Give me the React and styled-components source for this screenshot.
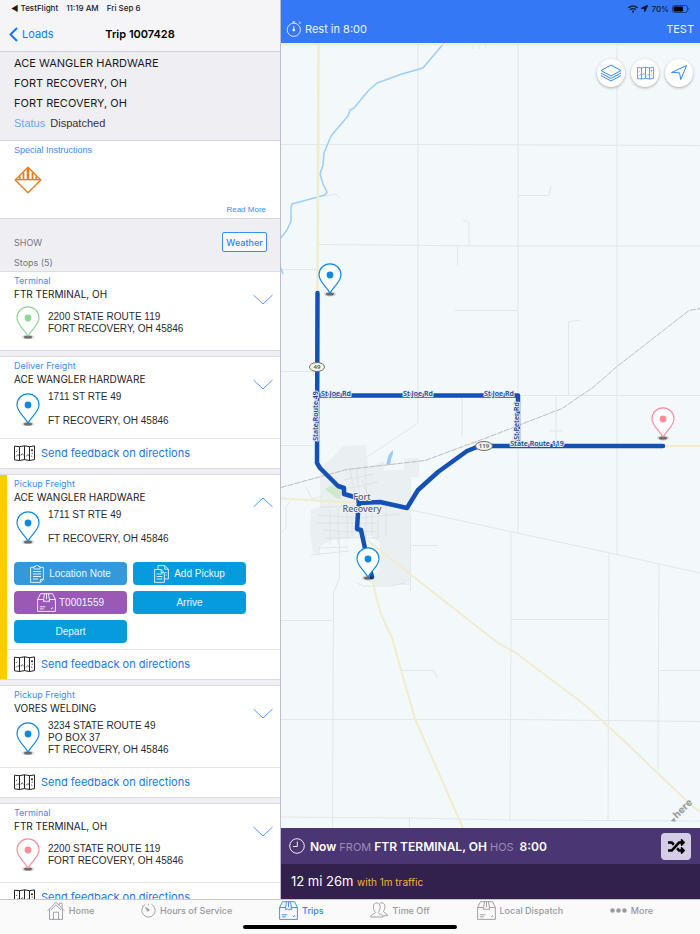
import React, { useState } from "react";
import styled, { createGlobalStyle, css } from "styled-components";
import { FaRandom, FaLocationArrow, FaWifi } from "react-icons/fa";

const PIN_COLORS = {
  green: "#8fd694",
  blue: "#1089e0",
  pink: "#ff8c9b",
};

const STOPS = [
  {
    id: 1,
    type: "Terminal",
    name: "FTR TERMINAL, OH",
    pin: "green",
    address: ["2200 STATE ROUTE 119", "FORT RECOVERY, OH 45846"],
  },
  {
    id: 2,
    type: "Deliver Freight",
    name: "ACE WANGLER HARDWARE",
    pin: "blue",
    address: ["1711 ST RTE 49", "", "FT RECOVERY, OH 45846"],
    feedback: true,
  },
  {
    id: 3,
    type: "Pickup Freight",
    name: "ACE WANGLER HARDWARE",
    pin: "blue",
    address: ["1711 ST RTE 49", "", "FT RECOVERY, OH 45846"],
    feedback: true,
    active: true,
  },
  {
    id: 4,
    type: "Pickup Freight",
    name: "VORES WELDING",
    pin: "blue",
    address: ["3234 STATE ROUTE 49", "PO BOX 37", "FT RECOVERY, OH 45846"],
    feedback: true,
  },
  {
    id: 5,
    type: "Terminal",
    name: "FTR TERMINAL, OH",
    pin: "pink",
    address: ["2200 STATE ROUTE 119", "FORT RECOVERY, OH 45846"],
    feedback: true,
  },
];

/* ---------- icons ---------- */

const PinShape = ({ color }) => (
  <>
    <ellipse cx="12" cy="31" rx="6" ry="2.4" fill="#000" opacity="0.16" />
    <ellipse cx="12" cy="31" rx="4" ry="1.5" fill="#000" opacity="0.5" />
    <path
      d="M12 30C8.5 23.5 1 19 1 11.8a11 11 0 0 1 22 0C23 19 15.5 23.5 12 30z"
      fill="#fff"
      stroke={color}
      strokeWidth="1.2"
      strokeLinejoin="round"
    />
    <circle cx="12" cy="12" r="3.4" fill={color} />
  </>
);

const PinIcon = ({ color }) => (
  <svg width="24" height="33" viewBox="0 0 24 33" aria-hidden="true">
    <PinShape color={color} />
  </svg>
);

const FoldedMapIcon = ({ width = 21, height = 16 }) => (
  <svg
    width={width}
    height={height}
    viewBox="0 0 21 16"
    fill="none"
    stroke="currentColor"
    strokeLinejoin="round"
    aria-hidden="true"
  >
    <path d="M.5 1.2l5 .5 5-.9 5 .9 5-.8v13.700l-5 .9-5-.9-5 .9-5-.7z" />
    <path d="M5.500 1.700v13.800M10.500.8v13.800M15.500 1.700v13.800" />
    <path
      d="M1.800 6.800l1.500-.8M2 11.500l1.700-1.700 1.500.6M6.800 10.500l1.300-1.800 1.600 1.500M12 11.500l1.500-1.700 1.500.5M17 10.800l1.400.9M18.200 7.500v1.500"
      strokeWidth="0.7"
    />
    <circle cx="18" cy="5.200" r="1" fill="currentColor" stroke="none" />
  </svg>
);

const WarningSignIcon = () => (
  <svg width="28" height="28" viewBox="0 0 28 28" fill="none" stroke="#e67e22" aria-hidden="true">
    <path d="M14 1.200L26.800 14 14 26.800 1.200 14z" strokeWidth="1.4" />
    <path d="M1.500 13.700h25" strokeWidth="1.4" />
    <path d="M14 2v11.500" strokeWidth="2.6" />
    <path d="M9.500 6.500v7M18.500 6.500v7M5.800 10.500v3M22.200 10.500v3" strokeWidth="1.8" />
  </svg>
);

const BoxIcon = () => (
  <svg
    width="19"
    height="19"
    viewBox="0 0 19 19"
    fill="none"
    stroke="currentColor"
    strokeWidth="0.9"
    strokeLinejoin="round"
    aria-hidden="true"
  >
    <path d="M.6 6.500v11.900h17.800V6.500L15.500.7h-12zM.6 6.500h6M12.400 6.500h6" />
    <path d="M7.500.7L6.600 6.500v2.300l1.800-1 1.200 1.400 1.200-1.400 1.600 1V6.500L11.500.7M9.500.7v5.500" />
    <path d="M2.800 13.800h5.500M2.800 15.900h4M14 16l1.800-1.600M15.800 16v-.5" />
  </svg>
);

const ClipboardIcon = () => (
  <svg width="14" height="18" viewBox="0 0 14 18" fill="none" stroke="currentColor" strokeWidth="0.9" aria-hidden="true">
    <path d="M4 2.300H.6v15.100h9.800l3-3V2.300H10" />
    <path d="M10.400 17.400v-3h3M4 1.500h1.500a1.500 1.500 0 0 1 3 0H10v2.500H4zM3 6.500h8M3 9h8M3 11.500h8M3 14h5" />
  </svg>
);

const PagesIcon = () => (
  <svg width="15" height="18" viewBox="0 0 15 18" fill="none" stroke="currentColor" strokeWidth="0.9" aria-hidden="true">
    <path d="M.6 4.500h6.500l3.200 3.200v9.700H.6zM7.100 4.500v3.200h3.200" />
    <path d="M4 4.500V.6h6.700l3.700 3.600v9.700h-4M10.700.6v3.600h3.700M2.500 9h5.800M2.500 11.500h5.800M2.500 14h5.800M11.500 7.500h1.300M11.500 10h1.300" />
  </svg>
);

const ClockIcon = () => (
  <svg width="16" height="16" viewBox="0 0 16 16" fill="none" stroke="currentColor" strokeWidth="0.9" aria-hidden="true">
    <circle cx="8" cy="8" r="7.3" />
    <path d="M8.300 3.500v5H4" />
  </svg>
);

const StopwatchIcon = () => (
  <svg width="16" height="16" viewBox="0 0 16 16" fill="none" stroke="currentColor" strokeWidth="0.9" aria-hidden="true">
    <circle cx="7.8" cy="8.8" r="6.6" />
    <path d="M7.800 5v4.500M6.300.8h3M7.800.8v1.400M13 2.800l1.200-1.300M13.400.8l1.500 1.300" />
    <circle cx="7.8" cy="9" r="1" fill="currentColor" />
  </svg>
);

const ChevronIcon = ({ up }) => (
  <svg width="20" height="11" viewBox="0 0 20 11" fill="none" stroke="currentColor" aria-hidden="true">
    <path d={up ? "M.5 10L10 1l9.500 9" : "M.5 1L10 10l9.500-9"} />
  </svg>
);

const LayersIcon = () => (
  <svg width="22" height="20" viewBox="0 0 22 20" fill="#fff" stroke="currentColor" strokeLinejoin="round" aria-hidden="true">
    <path d="M1 12.500l10 5.500 10-5.500" />
    <path d="M1 10l10 5.500L21 10" />
    <path d="M11 2l10 5.500L11 13 1 7.500z" />
  </svg>
);

const NavigateIcon = () => (
  <svg width="18" height="18" viewBox="0 0 18 18" fill="none" stroke="currentColor" strokeLinejoin="round" aria-hidden="true">
    <path d="M16.500 1.500L10.800 15.500 9.500 8.800 1.500 8.500z" />
  </svg>
);

const HomeIcon = () => (
  <svg width="18" height="19" viewBox="0 0 18 19" fill="none" stroke="currentColor" strokeWidth="0.9" aria-hidden="true">
    <path d="M.6 9.800L9 1.200l8.400 8.600M2.500 8.200v10.200h13V8.200M6.500 18.400v-7.200h5v7.200" />
    <path d="M12.300 4.400V2.200h2.800v5M4 9l5-5.200L14 9" />
  </svg>
);

const DialIcon = () => (
  <svg width="15" height="15" viewBox="0 0 15 15" fill="none" stroke="currentColor" strokeWidth="0.9" aria-hidden="true">
    <path d="M10.500 1.400A6.700 6.700 0 1 1 4.300 1.500M2.300 3.200l-.9-.8M7.500.8v1.500" />
    <path d="M4.500 4.500l3.800 2.300-1.500 1.500z" fill="currentColor" />
  </svg>
);

const PeopleIcon = () => (
  <svg width="18" height="16" viewBox="0 0 18 16" fill="none" stroke="currentColor" strokeWidth="0.9" aria-hidden="true">
    <path d="M.6 15c0-3 4-2.500 4.700-4.500C3.500 8 3 5.500 3.700 3 4.500.3 9 .3 9.800 3c.7 2.500.2 5-1.500 7.500.7 2 4.700 1.500 4.700 4.500z" />
    <path d="M9.800 1.600c1.800-1.500 4.500-.7 5 1.600.5 2.300-.2 4.300-1.400 6.200.5 1.800 4 1.600 4 4.400H13" />
  </svg>
);

const DotsIcon = () => (
  <svg width="17" height="5" viewBox="0 0 17 5" fill="currentColor" aria-hidden="true">
    <circle cx="2.5" cy="2.5" r="2.2" />
    <circle cx="8.5" cy="2.5" r="2.2" />
    <circle cx="14.5" cy="2.5" r="2.2" />
  </svg>
);

const BatteryIcon = () => (
  <svg width="18" height="8" viewBox="0 0 18 8" aria-hidden="true">
    <rect x="0.5" y="0.5" width="15" height="7" rx="2" fill="none" stroke="#1b3f82" />
    <rect x="1.5" y="1.5" width="9.5" height="5" rx="1" fill="#000" />
    <path d="M16.500 2.800v2.400q1-.4 1-1.200t-1-1.200z" fill="#1b3f82" />
  </svg>
);

/* ---------- map ---------- */

const MapPin = ({ x, y, color }) => (
  <g transform={`translate(${x - 12} ${y - 30})`}>
    <PinShape color={color} />
  </g>
);

const Shield = ({ x, y, rx, label }) => (
  <g>
    <ellipse cx={x} cy={y} rx={rx} ry="4.5" fill="#f4f4ea" stroke="#6f6f62" />
    <ShieldText x={x} y={y + 2}>
      {label}
    </ShieldText>
  </g>
);

const TripMap = () => (
  <MapSvg viewBox="281 43 419 785" preserveAspectRatio="xMidYMid slice" role="img" aria-label="Trip route map">
    <rect x="0" y="0" width="1400" height="1400" fill="#f3f8fb" />

    {/* town */}
    <path
      d="M313 553l-3-23 1-20 9-3V467l13-10 10-11 23-1 2 22 16-6v9h20v-12h15v19h-8v108h-34l-12-5 15-10v-27l-9-7-41 4-10 7v7z"
      fill="#eaeff2"
    />
    <path d="M325 489l11-6 5 5v11l-5-1z" fill="#d0e9cd" />
    <path d="M386 464c2-4 1-7 4-11l3-3c1 5-2 7-2 10l-1 5z" fill="#9ccdfb" />
    <g stroke="#dcdfe3" fill="none" strokeWidth="0.8">
      <path d="M318 515l38 3 45-4M316 523h60M322 530l35 2 20-1M325 538h54M330 510v35M338 508v37M347 506v32M352 516v20M366 506v33M372 504v30M378 510v28M386 506v30M320 507l35-1" />
      <path d="M350 470l5 25M356 468l4 30M362 480l8 20M344 480l30-6M350 488l28-6M306 487l6 12 10-3M365 465l2 35M311 555l38-4M318 548l30-1M357 583l6 3h28l14-3" />
    </g>

    {/* section roads */}
    <g stroke="#e5e6e8" fill="none">
      <path d="M418 43v380l-51 34M518 43v490M617 43v512M281 144.500h137l282 1M319 244.500l170 1.500h211" />
      <path d="M281 269.500h36M281 371.500h36M281 445.500h32M455 310.500h63M518 395.500h182M568.500 395v-73l12-2M518 195.500h31l2-10M463 220l6 2v24M457.500 247v18" />
      <path d="M325 196l11-2 4 4M473 44v5M479 44v5M486 44v4M556 396v47M549 431h14M462 436v-40" />
      <path d="M411 510l79 17 27 6 93 20 90 20M410.500 516v75M411 545.500h27M339.500 530v48l-6 15-1 235" />
      <path d="M511 533v100l-1 187M609 553l-1 267M659 564l-1 206M281 620.500h51M511 619.500h97M658 670.500h42M402 670.500h32l3 7" />
      <path d="M281 719.500h230l189 2M281 817l128 1 100 2 191 1M409.500 818v10M281 533l5-5v-22l5-5" />
    </g>

    {/* river */}
    <g stroke="#9bcefd" strokeWidth="1.5" fill="none" strokeLinejoin="round">
      <path d="M444 43l-21 25-21 6-25 9-9 8-14 17-4 2-2 6-17 20-7 17-1 12-3 9 3 10 4 8-2 3-33 9-1 4v13l-4 9-7 9" />
      <path d="M280 266l3 8" />
    </g>

    {/* highways */}
    <g stroke="#efedcd" strokeWidth="2" fill="none">
      <path d="M281 44.500h419M663 446h37M281 498.500l72 4 30 2 28 6" />
      <path d="M367 540l76 60 55 43 18 10 69 52 38 35 67 64 10 8M372 578l5 22 4 14 11 24 23 81 48 109" />
      <path d="M318.500 43l-1 250" strokeWidth="2.5" />
    </g>

    {/* railroad */}
    <path
      d="M281 487.500l29-8 37-10 78-9 65-24 72-28 31-21 24-21 72-56 11-2"
      stroke="#bcbdbf"
      strokeDasharray="6 1"
      fill="none"
    />

    {/* trip route */}
    <g stroke="#1450b5" strokeWidth="4.5" fill="none" strokeLinecap="round" strokeLinejoin="round">
      <path d="M317.500 293L317 463l3 5 18 18 6 2v6l14 4 1 5 21-1 27 6 11-18 20-18 29-21 10-4 8-1h178" />
      <path d="M317 395.500h201v50M359 503l-1 10-1 16 4 1 5 23 6 24" />
    </g>

    <RoadText x="336" y="396">St Joe Rd</RoadText>
    <RoadText x="418" y="396">St Joe Rd</RoadText>
    <RoadText x="499" y="396">St Joe Rd</RoadText>
    <RoadText x="537" y="446">State Route 119</RoadText>
    <RoadText transform="translate(318 416) rotate(-90)">State Route 49</RoadText>
    <RoadText transform="translate(519 421) rotate(-90)">St Peter Rd</RoadText>
    <Shield x={317} y={367} rx="7.5" label="49" />
    <Shield x={484} y={446} rx="8.5" label="119" />
    <TownText x="362" y="500">Fort</TownText>
    <TownText x="362" y="512">Recovery</TownText>

    <MapPin x={330} y={293} color={PIN_COLORS.blue} />
    <MapPin x={663} y={437} color={PIN_COLORS.pink} />
    <MapPin x={368} y={577} color={PIN_COLORS.blue} />
    <g transform="translate(675 821) rotate(-45)">
      <path d="M-3-3h5L0 1z" fill="#9c9fa1" />
      <LogoText x="3" y="0">here</LogoText>
    </g>
  </MapSvg>
);

/* ---------- sections ---------- */

const StopCard = ({ stop, open, onToggle }) => (
  <Card $active={stop.active}>
    <CardHead>
      <div>
        <StopType>{stop.type}</StopType>
        <StopName>{stop.name}</StopName>
        <AddressRow>
          <PinIcon color={PIN_COLORS[stop.pin]} />
          <Address>
            {stop.address.map((line, i) => (
              <AddressLine key={i}>{line}</AddressLine>
            ))}
          </Address>
        </AddressRow>
      </div>
      <ToggleBtn type="button" onClick={onToggle} aria-expanded={open} aria-label={`Toggle ${stop.name}`}>
        <ChevronIcon up={open} />
      </ToggleBtn>
    </CardHead>
    {open && (
      <Actions>
        <ActionBtn type="button" $bg="#3498db">
          <ClipboardIcon /> Location Note
        </ActionBtn>
        <ActionBtn type="button">
          <PagesIcon /> Add Pickup
        </ActionBtn>
        <ActionBtn type="button" $bg="#9b59b6" $gap="3px">
          <BoxIcon /> T0001559
        </ActionBtn>
        <ActionBtn type="button">Arrive</ActionBtn>
        <ActionBtn type="button">Depart</ActionBtn>
      </Actions>
    )}
    {stop.feedback && (
      <Feedback href="#feedback">
        <FoldedMapIcon />
        <span>Send feedback on directions</span>
      </Feedback>
    )}
  </Card>
);

const TABS = [
  { name: "Home", icon: <HomeIcon /> },
  { name: "Hours of Service", icon: <DialIcon /> },
  { name: "Trips", icon: <BoxIcon /> },
  { name: "Time Off", icon: <PeopleIcon /> },
  { name: "Local Dispatch", icon: <BoxIcon /> },
  { name: "More", icon: <DotsIcon /> },
];

export default function App() {
  const [openStop, setOpenStop] = useState(3);

  return (
    <Screen>
      <GlobalStyle />
      <Split>
        <Sidebar>
          <TopBar>
            <StatusLeft>
              <span>◀ TestFlight</span>
              <span>11:19 AM</span>
              <span>Fri Sep 6</span>
            </StatusLeft>
            <NavRow>
              <BackLink href="#loads">
                <svg width="9" height="15" viewBox="0 0 9 15" fill="none" stroke="currentColor" strokeWidth="2" aria-hidden="true">
                  <path d="M8 1L1.500 7.500 8 14" />
                </svg>
                Loads
              </BackLink>
              <NavTitle>Trip 1007428</NavTitle>
            </NavRow>
          </TopBar>
          <Scroller>
            <Summary>
              <SummaryLine>ACE WANGLER HARDWARE</SummaryLine>
              <SummaryLine>FORT RECOVERY, OH</SummaryLine>
              <SummaryLine>FORT RECOVERY, OH</SummaryLine>
              <StatusLine>
                <StatusLabel>Status</StatusLabel> Dispatched
              </StatusLine>
            </Summary>
            <Instructions>
              <InstructionsTitle>Special Instructions</InstructionsTitle>
              <WarningSignIcon />
              <ReadMore href="#instructions">Read More</ReadMore>
            </Instructions>
            <ShowSection>
              <ShowRow>
                <span>SHOW</span>
                <WeatherBtn type="button">Weather</WeatherBtn>
              </ShowRow>
              <StopCount>Stops (5)</StopCount>
            </ShowSection>
            <StopList>
              {STOPS.map((stop) => (
                <StopCard
                  key={stop.id}
                  stop={stop}
                  open={openStop === stop.id}
                  onToggle={() => setOpenStop(openStop === stop.id ? null : stop.id)}
                />
              ))}
            </StopList>
          </Scroller>
        </Sidebar>
        <Detail>
          <MapHeader>
            <StatusRight>
              <FaWifi size={10} />
              <FaLocationArrow size={7} />
              <span>70%</span>
              <BatteryIcon />
            </StatusRight>
            <MapTitle>
              <RestTime>
                <StopwatchIcon />
                Rest in 8:00
              </RestTime>
              <span>TEST</span>
            </MapTitle>
          </MapHeader>
          <MapArea>
            <TripMap />
            <MapTools>
              <RoundBtn type="button" aria-label="Layers">
                <LayersIcon />
              </RoundBtn>
              <RoundBtn type="button" aria-label="Overview">
                <FoldedMapIcon width={17} height={14} />
              </RoundBtn>
              <RoundBtn type="button" aria-label="My location">
                <NavigateIcon />
              </RoundBtn>
            </MapTools>
          </MapArea>
          <LegBar>
            <ClockIcon />
            <LegText>
              Now <Muted>FROM</Muted> FTR TERMINAL, OH <Muted>HOS</Muted>
              <Hos>8:00</Hos>
            </LegText>
            <SwapBtn type="button" aria-label="Change leg">
              <FaRandom size={17} />
            </SwapBtn>
          </LegBar>
          <TotalBar>
            12 mi 26m <Traffic>with 1m traffic</Traffic>
          </TotalBar>
        </Detail>
      </Split>
      <BottomBar>
        <Tabs>
          {TABS.map((tab) => (
            <Tab key={tab.name} href="#tab" $active={tab.name === "Trips"}>
              {tab.icon}
              {tab.name}
            </Tab>
          ))}
        </Tabs>
        <HomeIndicator />
      </BottomBar>
    </Screen>
  );
}

/* ---------- styles ---------- */

const GlobalStyle = createGlobalStyle`
  * { box-sizing: border-box; }
  body {
    margin: 0;
    font-family: Inter, "Liberation Sans", sans-serif;
    color: #1a1a1c;
  }
  button { font-family: inherit; cursor: pointer; }
  a { text-decoration: none; }
  p, h1, h2 { margin: 0; font-weight: 400; }
  svg { display: block; flex: none; }
`;

const helvetica = css`
  font-family: "Liberation Sans", Arial, sans-serif;
`;

const Screen = styled.div`
  height: 100vh;
  display: flex;
  flex-direction: column;
`;

const Split = styled.div`
  flex: 1;
  min-height: 0;
  display: flex;
`;

const Sidebar = styled.aside`
  width: 40%;
  display: flex;
  flex-direction: column;
  background: #efeef3;
`;

const TopBar = styled.header`
  background: #f5f5f7;
  border-bottom: 1px solid #cfced3;
`;

const StatusLeft = styled.div`
  display: flex;
  gap: 8px;
  padding-left: 11px;
  font-size: 8px;
  font-weight: 500;
  line-height: 17px;
`;

const NavRow = styled.div`
  display: grid;
  grid-template-columns: 1fr auto 1fr;
  align-items: center;
  height: 34px;
  padding: 0 9px;
`;

const BackLink = styled.a`
  display: flex;
  align-items: center;
  gap: 4px;
  font-size: 11px;
  color: #0a7aff;
`;

const NavTitle = styled.h1`
  font-size: 11px;
  font-weight: 600;
  color: #000;
`;

const Scroller = styled.div`
  flex: 1;
  overflow-y: auto;
  scrollbar-width: none;
`;

const Summary = styled.section`
  padding: 1px 14px 7px;
  border-bottom: 1px solid #d6d5da;
`;

const SummaryLine = styled.p`
  font-size: 11px;
  line-height: 20px;
`;

const StatusLine = styled.p`
  ${helvetica}
  font-size: 11px;
  line-height: 20px;
  color: #333336;
`;

const StatusLabel = styled.span`
  margin-right: 2px;
  color: #6aa5f7;
`;

const Instructions = styled.section`
  ${helvetica}
  display: flex;
  flex-direction: column;
  gap: 10px;
  padding: 3px 14px 2px;
  background: #fff;
  border-bottom: 1px solid #d6d5da;
`;

const InstructionsTitle = styled.h2`
  font-size: 9px;
  line-height: 12px;
  color: #3a8cf5;
`;

const ReadMore = styled.a`
  align-self: flex-end;
  font-size: 8px;
  line-height: 12px;
  color: #3a8cf5;
`;

const ShowSection = styled.section`
  padding: 13px 13px 2px 14px;
  font-size: 9px;
  color: #77777c;
`;

const ShowRow = styled.div`
  display: flex;
  align-items: center;
  justify-content: space-between;
`;

const WeatherBtn = styled.button`
  width: 45px;
  height: 20px;
  padding: 0;
  border: 1px solid #3a8cf5;
  border-radius: 2px;
  background: #f8f9fd;
  font-size: 9px;
  font-weight: 500;
  color: #2f83f5;
`;

const StopCount = styled.h2`
  margin-top: 5px;
  font-size: 9px;
  line-height: 12px;
`;

const StopList = styled.div`
  display: flex;
  flex-direction: column;
  gap: 5px;
`;

const Card = styled.article`
  position: relative;
  background: #fff;
  border: solid #dcdbe0;
  border-width: 1px 0;

  ${(p) =>
    p.$active &&
    css`
      &::before {
        content: "";
        position: absolute;
        top: 0;
        bottom: 0;
        left: 0;
        width: 7px;
        background: #ffcc00;
      }
    `}
`;

const CardHead = styled.div`
  display: flex;
  justify-content: space-between;
  align-items: flex-start;
  padding: 2px 7px 6px 14px;
`;

const StopType = styled.p`
  font-size: 9px;
  line-height: 13px;
  color: #3a8cf5;
`;

const StopName = styled.h2`
  font-size: 10px;
  line-height: 14px;
`;

const AddressRow = styled.div`
  display: flex;
  align-items: center;
  gap: 8px;
  padding: 5px 2px;
`;

const Address = styled.address`
  ${helvetica}
  font-style: normal;
  font-size: 10px;
  line-height: 12px;
  color: #2a2a2c;
`;

const AddressLine = styled.div`
  height: 12px;
`;

const ToggleBtn = styled.button`
  padding: 20px 0 8px;
  border: none;
  background: none;
  color: #4c9af8;
`;

const Actions = styled.div`
  display: grid;
  grid-template-columns: repeat(2, minmax(0, 1fr));
  gap: 6px;
  max-width: 260px;
  padding: 6px 14px;
`;

const ActionBtn = styled.button`
  display: flex;
  align-items: center;
  justify-content: center;
  gap: ${(p) => p.$gap || "5px"};
  height: 23px;
  padding: 0;
  border: none;
  border-radius: 4px;
  background: ${(p) => p.$bg || "#059bdc"};
  font-family: "Liberation Sans", Arial, sans-serif;
  font-size: 10px;
  color: #eef8ff;
`;

const Feedback = styled.a`
  display: flex;
  align-items: center;
  gap: 6px;
  height: 30px;
  padding: 0 0 1px 14px;
  border-top: 1px solid #e6e6ea;
  color: #222;

  span {
    font-size: 11px;
    color: #1677e0;
  }
`;

const Detail = styled.main`
  flex: 1;
  min-width: 0;
  display: flex;
  flex-direction: column;
  border-left: 1px solid #b9c0cc;
`;

const MapHeader = styled.header`
  background: #3478f6;
  color: #eef4ff;
`;

const StatusRight = styled.div`
  display: flex;
  align-items: center;
  justify-content: flex-end;
  gap: 3px;
  height: 17px;
  padding-right: 10px;
  font-size: 8px;
  font-weight: 500;
  color: #0b1730;
`;

const MapTitle = styled.div`
  display: flex;
  align-items: center;
  justify-content: space-between;
  height: 26px;
  padding: 0 6px 2px 5px;
  font-size: 11px;
`;

const RestTime = styled.span`
  display: flex;
  align-items: center;
  gap: 3px;
`;

const MapArea = styled.section`
  position: relative;
  flex: 1;
  min-height: 0;
`;

const MapSvg = styled.svg`
  width: 100%;
  height: 100%;
`;

const RoadText = styled.text`
  font-family: "Noto Sans", sans-serif;
  font-size: 7px;
  font-weight: 600;
  text-anchor: middle;
  fill: #1c438c;
  stroke: #e3ecf8;
  stroke-width: 2px;
  stroke-linejoin: round;
  paint-order: stroke;
`;

const ShieldText = styled.text`
  font-family: "Noto Sans", sans-serif;
  font-size: 6px;
  font-weight: 600;
  text-anchor: middle;
  fill: #55554a;
`;

const TownText = styled.text`
  font-family: "Noto Sans", sans-serif;
  font-size: 9px;
  font-weight: 500;
  text-anchor: middle;
  fill: #566072;
  stroke: #eef3f6;
  stroke-width: 2px;
  stroke-linejoin: round;
  paint-order: stroke;
`;

const LogoText = styled.text`
  font-family: Inter, sans-serif;
  font-size: 10px;
  font-weight: 800;
  fill: #9c9fa1;
`;

const MapTools = styled.div`
  position: absolute;
  top: 16px;
  right: 7px;
  display: flex;
  gap: 6px;
`;

const RoundBtn = styled.button`
  display: flex;
  align-items: center;
  justify-content: center;
  width: 28px;
  height: 28px;
  padding: 0;
  border: none;
  border-radius: 50%;
  background: #fff;
  box-shadow: 0 1px 3px rgba(0, 0, 0, 0.3);
  color: #2f86f6;
`;

const LegBar = styled.div`
  display: flex;
  align-items: center;
  gap: 5px;
  height: 36px;
  padding: 0 9px 0 8px;
  background: #4a3673;
  color: #fff;
`;

const LegText = styled.p`
  flex: 1;
  font-size: 12px;
  font-weight: 600;
`;

const Muted = styled.span`
  font-size: 11px;
  font-weight: 400;
  color: #9a8cb8;
`;

const Hos = styled.span`
  margin-left: 6px;
`;

const SwapBtn = styled.button`
  display: flex;
  align-items: center;
  justify-content: center;
  width: 30px;
  height: 27px;
  padding: 0;
  border: none;
  border-radius: 4px;
  background: #d5cde6;
  color: #000;
`;

const TotalBar = styled.p`
  height: 35px;
  padding-left: 10px;
  background: #32214c;
  font-size: 13px;
  line-height: 35px;
  color: #fff;
`;

const Traffic = styled.span`
  font-size: 10px;
  color: #f2b632;
`;

const BottomBar = styled.footer`
  display: flex;
  flex-direction: column;
  align-items: center;
  height: 35px;
  background: #fafafa;
  border-top: 1px solid #c8c8cc;
`;

const Tabs = styled.nav`
  display: flex;
  align-items: center;
  justify-content: space-evenly;
  width: 100%;
  height: 20px;
`;

const Tab = styled.a`
  display: flex;
  align-items: center;
  gap: 4px;
  font-size: 9px;
  font-weight: 500;
  color: ${(p) => (p.$active ? "#2f86f6" : "#98989d")};
`;

const HomeIndicator = styled.div`
  width: 214px;
  height: 4px;
  margin-top: 5px;
  border-radius: 2px;
  background: #000;
`;
